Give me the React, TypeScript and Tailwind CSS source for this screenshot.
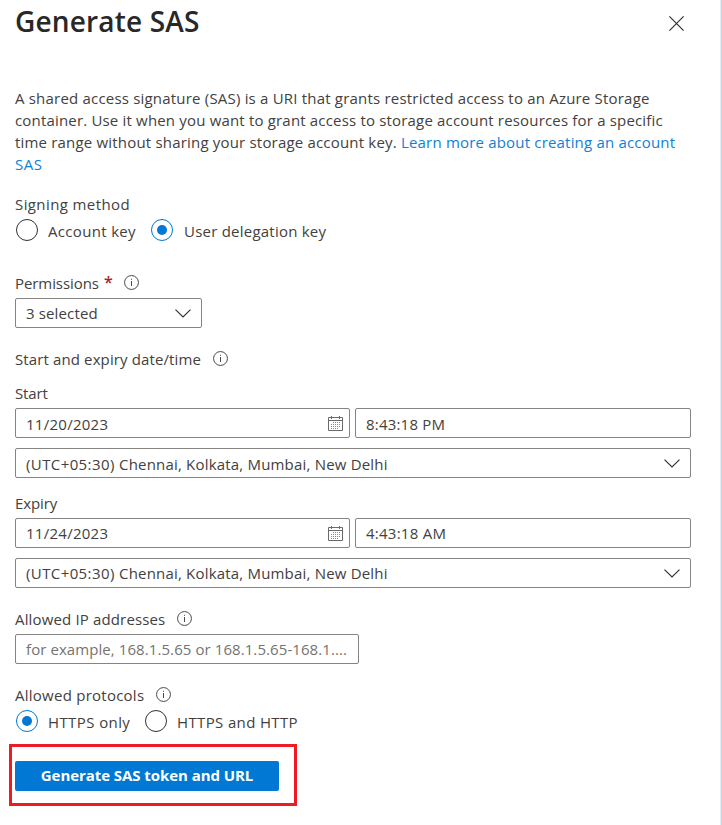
import React from 'react';

function InfoIcon({ className = '' }: { className?: string }) {
  return (
    <svg viewBox="0 0 15 15" className={`h-[15px] w-[15px] shrink-0 ${className}`} fill="none" stroke="#4a4a4a">
      <circle cx="7.5" cy="7.5" r="6.95" strokeWidth="1" />
      <path d="M7.5 6v5M7.5 3.8v1" strokeWidth="1" />
    </svg>
  );
}

function Chevron() {
  return (
    <svg viewBox="0 0 16 9" className="h-[9px] w-4 shrink-0" fill="none" stroke="#323130" strokeWidth="1.2">
      <path d="M0.5 0.6L8 8L15.5 0.6" />
    </svg>
  );
}

function CalendarIcon() {
  return (
    <svg viewBox="0 0 15 15" className="h-[15px] w-[15px] shrink-0" fill="none" stroke="#6b6a69">
      <path d="M0.5 1.5h14v13h-14z" strokeWidth="1" />
      <path d="M0 4.5h15" strokeWidth="1" />
      <path d="M3.5 0v3M11.5 0v3" strokeWidth="1" />
      <path d="M5 6.5h8M3 8.5h10M3 10.5h10M3 12.5h7" stroke="#8a8988" strokeWidth="1" strokeDasharray="1 1" />
    </svg>
  );
}

function Radio({ checked = false }: { checked?: boolean }) {
  return (
    <span
      className={`flex h-[22px] w-[22px] shrink-0 items-center justify-center rounded-full border ${
        checked ? 'border-[#0078d4]' : 'border-[#323130]'
      }`}
    >
      {checked && <span className="h-[10px] w-[10px] rounded-full bg-[#0078d4]" />}
    </span>
  );
}

const field = 'flex h-[30px] items-center rounded-[2px] border border-[#868483] pl-2.5 leading-[28px]';

function DateRow({ date, time, dateTracking, timeTracking, low }: { date: string; time: string; dateTracking: string; timeTracking: string; low?: boolean }) {
  const shift = low ? 'pt-0.5' : '';
  return (
    <div className="flex gap-[5px]">
      <div className={`${field} w-[335px] justify-between pr-1.5`}>
        <span className={`${dateTracking} ${shift}`}>{date}</span>
        <CalendarIcon />
      </div>
      <div className={`${field} w-[336px]`}>
        <span className={`${timeTracking} ${shift}`}>{time}</span>
      </div>
    </div>
  );
}

function TimeZoneSelect({ low }: { low?: boolean }) {
  return (
    <div className={`${field} mt-2.5 w-[676px] justify-between pr-2.5`}>
      <span className={`tracking-[0.19px] ${low ? 'pt-0.5' : ''}`}>
        <span className="tracking-[0.4px]">(UTC+05:30) </span>Chennai, Kolkata, Mumbai, New Delhi
      </span>
      <Chevron />
    </div>
  );
}

export default function App() {
  return (
    <div className="flex h-[825px] w-[722px] overflow-hidden bg-white font-['Open_Sans','Noto_Sans',sans-serif] text-[15px] leading-[22px] whitespace-nowrap text-[#424140]">
      <main className="w-[720px] pl-[15px]">
        <header className="flex h-[87px] items-start justify-between pt-[3px] pr-9">
          <h1 className="text-[28px] leading-[36px] font-semibold tracking-[0.18px] text-[#292827]">Generate SAS</h1>
          <svg viewBox="0 0 15 15" className="mt-[13px] h-[15px] w-[15px]" fill="none" stroke="#323130" strokeWidth="1.2">
            <path d="M0.4 0.4L14.6 14.6M14.6 0.4L0.4 14.6" />
          </svg>
        </header>

        <p>
          <span className="block tracking-[0.198px]">A shared access signature (SAS) is a URI that grants restricted access to an Azure Storage</span>
          <span className="block tracking-[0.177px]">container. Use it when you want to grant access to storage account resources for a specific</span>
          <span className="block tracking-[0.188px]">
            time range without sharing your storage account key. <a className="text-[#1080d6]">Learn more about creating an account</a>
          </span>
          <a className="block tracking-[0.5px] text-[#1080d6]">SAS</a>
        </p>

        <div className="mt-[18px] tracking-[0.4px]">Signing method</div>
        <div className="mt-1 flex h-[22px] pl-px">
          <Radio />
          <span className="ml-[10px] w-[103px] pt-px tracking-[0.33px]">Account key</span>
          <Radio checked />
          <span className="ml-[11px] pt-px tracking-[0.23px]">User delegation key</span>
        </div>

        <div className="mt-[31px] flex h-[22px]">
          <span className="w-[89px] tracking-[-0.08px]">Permissions</span>
          <span className="-mt-px w-5 text-[16px] font-semibold text-[#a4262c]">*</span>
          <InfoIcon className="mt-[3px]" />
        </div>
        <div className={`${field} mt-1 w-[187px] justify-between pr-2.5`}>
          <span className="tracking-[0.14px]">3 selected</span>
          <Chevron />
        </div>

        <div className="mt-5 flex h-[22px]">
          <span className="w-[198px] tracking-[0.12px]">Start and expiry date/time</span>
          <InfoIcon className="mt-[3px]" />
        </div>

        <div className="mt-3 mb-1 tracking-[-0.13px]">Start</div>
        <DateRow date="11/20/2023" time="8:43:18 PM" dateTracking="tracking-[0.27px]" timeTracking="tracking-[0.2px]" low />
        <TimeZoneSelect low />

        <div className="mt-[14px] mb-1 tracking-[-0.1px]">Expiry</div>
        <DateRow date="11/24/2023" time="4:43:18 AM" dateTracking="tracking-[0.27px]" timeTracking="tracking-[0.25px]" />
        <TimeZoneSelect />

        <div className="mt-5 mb-1 flex h-[22px]">
          <span className="w-[162px] tracking-[0.15px]">Allowed IP addresses</span>
          <InfoIcon className="mt-[3px]" />
        </div>
        <div className={`${field} w-[344px] text-[#757371]`}>
          <span className="tracking-[0.08px]">for example, 168.1.5.65 or 168.1.5.65-168.1....</span>
        </div>

        <div className="mt-5 flex h-[22px]">
          <span className="w-[141px] tracking-[0.25px]">Allowed protocols</span>
          <InfoIcon className="mt-[3px]" />
        </div>
        <div className="mt-1 flex h-[22px] pl-px">
          <Radio checked />
          <span className="ml-[10px] w-[97px] pt-px tracking-[0.4px]">HTTPS only</span>
          <Radio />
          <span className="ml-[10px] pt-px tracking-[0.36px]">HTTPS and HTTP</span>
        </div>

        <div className="mt-3 -ml-1.5 h-[62px] w-[288px] border-[3px] border-[#ed1c24] pt-[14px] pl-[3px]">
          <button className="block h-[30px] w-[264px] rounded-[2px] bg-[#0078d4] text-center leading-[28px] font-bold tracking-[-0.065px] text-white">
            <span className="block h-[30px]">Generate SAS token and URL</span>
          </button>
        </div>
      </main>
      <div className="w-px bg-[#e4ebf1]" />
      <div className="w-px bg-[#cdd6de]" />
    </div>
  );
}
